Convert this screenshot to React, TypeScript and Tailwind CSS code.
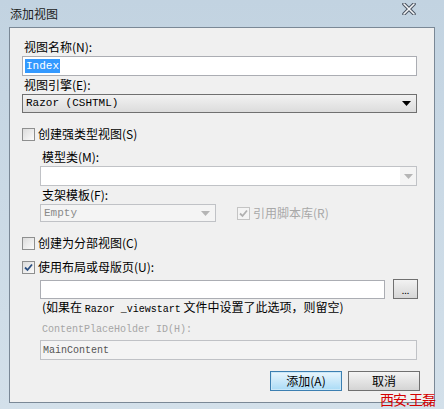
import { ReactNode } from "react";

const cjk = "font-['Noto_Sans_CJK_SC','Noto_Sans',sans-serif]";
const mono = "font-['Liberation_Mono','Noto_Sans_CJK_SC',monospace]";

const Label = ({ children, disabled, className = "" }: { children: ReactNode; disabled?: boolean; className?: string }) => (
    <div className={`h-[18px] leading-[18px] text-[12px] ${disabled ? "text-[#a0a0a0]" : "text-black"} ${className}`}>
        {children}
    </div>
);

const Check = ({ checked, disabled }: { checked?: boolean; disabled?: boolean }) => (
    <span
        className={`flex h-[13px] w-[13px] shrink-0 items-center justify-center border ${
            disabled ? "border-[#c4c4c4] bg-[#f4f4f4]" : "border-[#8e8f8f] bg-gradient-to-br from-[#dcdcdc] to-[#fbfbfb]"
        }`}
    >
        {checked && (
            <svg width="9" height="9" viewBox="0 0 9 9">
                <path
                    d="M1 4.5 L3.5 7 L8 1.5"
                    fill="none"
                    stroke={disabled ? "#b0b0b0" : "#2b4f82"}
                    strokeWidth="1.8"
                />
            </svg>
        )}
    </span>
);

const Arrow = ({ color }: { color: string }) => (
    <svg width="9" height="5" viewBox="0 0 9 5">
        <path d="M0 0 H9 L4.5 5 Z" fill={color} />
    </svg>
);

export default function App() {
    return (
        <div className={`relative flex h-[409px] w-[444px] flex-col bg-gradient-to-b from-[#c2d3e1] to-[#d3e0ea] ${cjk}`}>
            {/* title bar */}
            <div className="flex h-[27px] shrink-0 items-start justify-between pl-[10px] pr-[28px]">
                <span className="mt-[5px] text-[12px] leading-[18px] text-[#1b1b1b]">添加视图</span>
                <svg width="14" height="12" viewBox="0 0 14 12" className="mt-[3px]">
                    <path d="M2 1 L12 11 M12 1 L2 11" stroke="#4a5360" strokeWidth="3.6" strokeLinecap="round" />
                    <path d="M2 1 L12 11 M12 1 L2 11" stroke="#f4f6f8" strokeWidth="1.6" strokeLinecap="round" />
                </svg>
            </div>

            {/* client area */}
            <div className="mx-[9px] mb-[6px] flex-1 border border-[#7a8896] bg-[#f0f0f0] pl-[12px] pr-[17px] pt-[10px]">
                <Label className="pl-[2px]">视图名称(N):</Label>
                <div className="flex h-[20px] items-center border border-[#abadb3] bg-white pl-[2px]">
                    <span className={`bg-[#3399ff] px-[1px] text-[11px] leading-[14px] text-white ${mono}`}>Index</span>
                </div>

                <Label className="pl-[2px]">视图引擎(E):</Label>
                <div className="flex h-[19px] items-center justify-between border border-[#707070] bg-gradient-to-b from-[#f2f2f2] to-[#dcdcdc] pl-[3px] pr-[5px]">
                    <span className={`text-[11px] text-black ${mono}`}>Razor (CSHTML)</span>
                    <Arrow color="#000" />
                </div>

                <div className="mt-[13px] flex h-[16px] items-center gap-[3px]">
                    <Check />
                    <span className="text-[12px] text-black">创建强类型视图(S)</span>
                </div>

                <div className="ml-[18px]">
                    <Label className="mt-[6px] pl-[2px]">模型类(M):</Label>
                    <div className="flex h-[20px] items-center justify-end border border-[#c0c2c6] bg-white">
                        <div className="flex h-full w-[16px] items-center justify-center bg-[#f4f4f4]">
                            <Arrow color="#b5b5b5" />
                        </div>
                    </div>

                    <Label className="pl-[2px]">支架模板(F):</Label>
                    <div className="flex h-[18px] items-center">
                        <div className="flex h-full w-[176px] items-center justify-between border border-[#c0c2c6] bg-[#f4f4f4] pl-[3px] pr-[5px]">
                            <span className={`text-[11px] text-[#8a8a8a] ${mono}`}>Empty</span>
                            <Arrow color="#b5b5b5" />
                        </div>
                        <div className="ml-[21px] flex items-center gap-[3px]">
                            <Check checked disabled />
                            <span className="text-[12px] text-[#a8a8a8]">引用脚本库(R)</span>
                        </div>
                    </div>
                </div>

                <div className="mt-[13px] flex h-[16px] items-center gap-[3px]">
                    <Check />
                    <span className="text-[12px] text-black">创建为分部视图(C)</span>
                </div>
                <div className="mt-[8px] flex h-[16px] items-center gap-[3px]">
                    <Check checked />
                    <span className="text-[12px] text-black">使用布局或母版页(U):</span>
                </div>

                <div className="ml-[18px]">
                    <div className="mt-[4px] flex items-center gap-[8px]">
                        <div className="h-[19px] flex-1 border border-[#abadb3] bg-white" />
                        <div className="-mr-[1px] flex h-[20px] w-[25px] items-end justify-center border border-[#707070] bg-gradient-to-b from-[#f2f2f2] to-[#d6d6d6] pb-[3px] text-[9px] leading-[9px] text-black">
                            ...
                        </div>
                    </div>
                    <div className="h-[16px] pl-[2px] text-[12px] leading-[16px] text-black">
                        (如果在 <span className={`text-[10px] ${mono}`}>Razor _viewstart</span> 文件中设置了此选项，则留空)
                    </div>
                    <div className={`mt-[7px] h-[16px] pl-[2px] text-[10px] leading-[16px] text-[#a6a6a6] ${mono}`}>
                        ContentPlaceHolder ID(H):
                    </div>
                    <div className="mt-[2px] flex h-[20px] items-center border border-[#c0c2c6] bg-[#f4f4f4] pl-[2px]">
                        <span className={`text-[10px] text-[#555] ${mono}`}>MainContent</span>
                    </div>
                </div>

                <div className="mt-[11px] flex justify-end gap-[6px] pr-[0px]">
                    <button className="h-[20px] w-[72px] border border-[#3c7fb1] bg-gradient-to-b from-[#eaf6fd] to-[#a9dbf6] text-[12px] leading-[18px] text-black shadow-[inset_0_0_0_1px_#cbe8f8]">
                        添加(A)
                    </button>
                    <button className="-mr-[3px] h-[20px] w-[72px] border border-[#707070] bg-gradient-to-b from-[#f4f4f4] to-[#d4d4d4] text-[12px] leading-[18px] text-black">
                        取消
                    </button>
                </div>
            </div>

            {/* watermark */}
            <div className="absolute bottom-[2px] right-[9px] text-[14px] leading-[16px] tracking-[-1px] text-[#d40000]">西安.王磊</div>
        </div>
    );
}
